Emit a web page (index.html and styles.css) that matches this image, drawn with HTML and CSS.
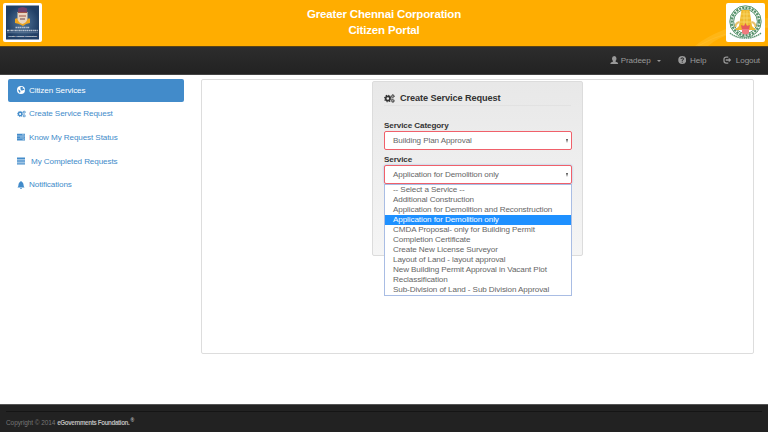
FILE: index.html
```html
<!DOCTYPE html>
<html lang="en">
<head>
<meta charset="utf-8">
<title>Citizen Portal</title>
<link rel="stylesheet" href="styles.css">
</head>
<body>
<svg width="0" height="0" class="defs">
  <defs>
    <symbol id="gears" viewBox="0 0 20 16">
      <circle cx="7" cy="8" r="3.9" fill="none" stroke="currentColor" stroke-width="3"/>
      <circle cx="7" cy="8" r="5.9" fill="none" stroke="currentColor" stroke-width="2" stroke-dasharray="2.3 2.33"/>
      <circle cx="16" cy="3.8" r="2" fill="none" stroke="currentColor" stroke-width="1.7"/>
      <circle cx="16" cy="3.8" r="3.2" fill="none" stroke="currentColor" stroke-width="1" stroke-dasharray="1.3 1.2"/>
      <circle cx="16" cy="12.2" r="2" fill="none" stroke="currentColor" stroke-width="1.7"/>
      <circle cx="16" cy="12.2" r="3.2" fill="none" stroke="currentColor" stroke-width="1" stroke-dasharray="1.3 1.2"/>
    </symbol>
  </defs>
</svg>
<header class="banner">
  <svg class="logo" viewBox="0 0 39 39">
    <rect width="39" height="39" rx="2" fill="#fff"/>
    <defs><radialGradient id="sky"><stop offset="0" stop-color="#54779a"/><stop offset="1" stop-color="#213f65"/></radialGradient></defs>
    <rect x="3" y="2.5" width="33" height="34" fill="url(#sky)"/>
    <path d="M12 16q2-2 4 1l4 3 4-3q2-3 3-1v4l-4 1-3 2-4-2-4-1z" fill="#eda51f"/>
    <path d="M15 5.500q4.500-3 9 0v4H15z" fill="#71406c"/>
    <path d="M14.500 9h10v7q-1 4-5 5-4-1-5-5z" fill="#ead5bf"/>
    <path d="M15 9.500h9M16 13h7" stroke="#9f5547"/>
    <path d="M17 16h5" stroke="#66444d"/>
    <path d="M12.500 24.500h14M4 27.500h31" stroke="#b8c3d1" stroke-width="1.400" stroke-dasharray="2 .5 1 .4"/>
    <path d="M4 29.700h31" stroke="#718aa6" stroke-width=".6"/>
    <text x="19.500" y="34" text-anchor="middle" class="logo-name">Greater Chennai Corporation</text>
  </svg>
  <h1 class="title">Greater Chennai Corporation<br>Citizen Portal</h1>
  <div class="banner-end">
    <svg class="swoosh" viewBox="0 0 108 46">
      <path d="M35 46Q58 27 108 18V28Q66 30 48 46z" fill="#ffb615"/>
      <path d="M38 46Q65 30 108 26" fill="none" stroke="#ffbd2c" stroke-width=".7"/>
    </svg>
    <svg class="logo" viewBox="0 0 39 39">
      <rect width="39" height="39" rx="2" fill="#fff"/>
      <circle cx="19.500" cy="18.500" r="15.700" fill="none" stroke="#287443" stroke-width=".8"/>
      <circle cx="19.500" cy="18.500" r="13.700" fill="none" stroke="#55916a" stroke-width="2.300" stroke-dasharray="2.200 1"/>
      <circle cx="19.500" cy="18.500" r="11.900" fill="#fff" stroke="#287443" stroke-width=".8"/>
      <path d="M15.500 7h8l2.500 16 4 4H9l4-4z" fill="#efb92f"/>
      <path d="M15 11h9M14.500 15h10M14 19h11M18 8v14M21 8v14" stroke="#fbdc73" stroke-width=".7"/>
      <path d="M9.500 24q0-4 4-5M29.500 24q0-4-4-5" fill="none" stroke="#e8c16b" stroke-width="2"/>
      <path d="M15 22l3 1 1.500-3 1.500 3 3-1-1 5h-7z" fill="#e65b5a"/>
      <path d="M16 26h7v4q-3.500 3-7 0z" fill="#f07b80"/>
      <path d="M4 30q6 5 15.500 5t15.500-5" fill="none" stroke="#5a9470" stroke-width="1.500" stroke-dasharray="1.500 .6"/>
    </svg>
  </div>
</header>
<nav class="navbar">
  <a class="nav-item user"><svg class="user-icon" viewBox="0 0 16 16"><path d="M8 0q4.500 0 4.500 5 0 3-2 5l.5 1.500q5 1 5 4.500H0q0-3.500 5-4.500l.5-1.500Q3.500 8 3.500 5q0-5 4.500-5z" fill="currentColor"/></svg><span>Pradeep</span><i class="caret"></i></a>
  <a class="nav-item help"><svg viewBox="0 0 16 16"><circle cx="8" cy="8" r="8" fill="currentColor"/><path d="M5.300 6Q5.300 3.800 8 3.800T10.600 6Q10.600 7.500 8 8.500v1.500M8 11.300v2" fill="none" stroke="#252525" stroke-width="2"/></svg><span>Help</span></a>
  <a class="nav-item logout"><svg viewBox="0 0 16 16"><path d="M10 2H6Q1.500 2 1.500 6v4Q1.500 14 6 14h4" fill="none" stroke="currentColor" stroke-width="2.500"/><path d="M5 6.500h6V3.500L16 8l-5 4.500v-3H5z" fill="currentColor"/></svg><span>Logout</span></a>
</nav>
<div class="page">
  <ul class="sidebar">
    <li class="active"><svg viewBox="0 0 16 16"><circle cx="8" cy="8" r="8" fill="#fff"/><path d="M8 1.500l4 1-1 2.500 3 .5 1 3-3-.5-2 1.500-3-2 1-2-2-1zM2 7l3 1 2 2-1 4-2-2z" fill="#428bca"/></svg><span>Citizen Services</span></li>
    <li><svg class="gear" viewBox="0 0 20 16"><use href="#gears"/></svg><span>Create Service Request</span></li>
    <li><svg viewBox="0 0 16 16"><path d="M0 1.500h16v4H0zM0 6.300h16v4H0zM0 11.100h16v4H0z" fill="currentColor"/><path d="M10 3.500h5M6 8.300h9M11 13.100h4" stroke="#b4d2eb" stroke-width="1.400"/></svg><span>Know My Request Status</span></li>
    <li class="completed"><svg viewBox="0 0 16 16"><path d="M0 2.500h16M0 6.200h16M0 9.900h16M0 13.600h16" stroke="currentColor" stroke-width="2.600"/></svg><span>My Completed Requests</span></li>
    <li><svg viewBox="0 0 16 16"><path d="M7 0h2v1.500q4 1 4 5.500 0 4 2 6H1q2-2 2-6 0-4.500 4-5.500zM6 14h4q-.5 2-2 2t-2-2z" fill="currentColor"/></svg><span>Notifications</span></li>
  </ul>
  <main class="panel">
    <form class="well">
      <h2 class="heading"><svg viewBox="0 0 20 16"><use href="#gears"/></svg><span>Create Service Request</span></h2>
      <label class="first-label">Service Category</label>
      <div class="select">Building Plan Approval<i class="arrow"></i></div>
      <label class="second-label">Service</label>
      <div class="select open">Application for Demolition only<i class="arrow"></i>
        <ul class="options">
          <li><span>-- Select a Service --</span></li>
          <li><span>Additional Construction</span></li>
          <li><span>Application for Demolition and Reconstruction</span></li>
          <li class="chosen"><span>Application for Demolition only</span></li>
          <li><span>CMDA Proposal- only for Building Permit</span></li>
          <li><span>Completion Certificate</span></li>
          <li><span>Create New License Surveyor</span></li>
          <li><span>Layout of Land - layout approval</span></li>
          <li><span>New Building Permit Approval in Vacant Plot</span></li>
          <li><span>Reclassification</span></li>
          <li><span>Sub-Division of Land - Sub Division Approval</span></li>
        </ul>
      </div>
    </form>
  </main>
</div>
<footer class="footer">
  <p>Copyright © 2014 <b>eGovernments Foundation.<sup>®</sup></b></p>
</footer>
</body>
</html>
```
FILE: styles.css
```css
* { box-sizing: border-box; }
body {
  margin: 0;
  height: 432px;
  display: flex;
  flex-direction: column;
  overflow: hidden;
  background: #fff;
  font: 8.1px/11px "Liberation Sans", Arial, sans-serif;
  letter-spacing: -0.1px;
}
ul, h1, h2, p { margin: 0; padding: 0; list-style: none; }
svg { display: block; flex: none; }
.defs { position: absolute; }
.banner {
  height: 46px;
  flex: none;
  display: grid;
  grid-template-columns: 108px 1fr 108px;
  align-items: center;
  background: #ffad00;
}
.logo { width: 39px; height: 39px; margin: -1px 0 0 3px; overflow: visible; }
.logo-name { font: bold 2.1px "Liberation Sans", sans-serif; letter-spacing: 0; fill: #fff; }
.title {
  color: #fff;
  text-align: center;
  font-size: 11.5px;
  letter-spacing: -0.16px;
  line-height: 16px;
  margin-top: -2px;
}
.banner-end { position: relative; height: 46px; display: flex; justify-content: flex-end; align-items: center; }
.banner-end .logo { position: relative; margin: -1px 3px 0 0; }
.swoosh { position: absolute; left: 0; top: 0; width: 108px; height: 46px; }
.navbar {
  height: 29px;
  flex: none;
  display: flex;
  justify-content: flex-end;
  align-items: center;
  padding-right: 8px;
  color: #999;
  background: linear-gradient(#2d2d2d, #222);
  border-top: 1px solid #5a4316;
  border-bottom: 1px solid #444;
}
.nav-item { display: flex; align-items: center; }
.nav-item svg { width: 8.5px; height: 8px; margin: -1px 4px 0 0; }
.nav-item .user-icon { margin-right: 2px; }
.help { margin-left: 17px; }
.logout { margin-left: 17px; }
.caret { margin: 1px 0 0 6px; border: 2px solid transparent; border-top-color: #999; border-bottom: 0; }
.page { flex: 1; display: flex; align-items: flex-start; padding: 4px 14px 0 8px; }
.sidebar {
  width: 176px;
  flex: none;
  color: #428bca;
  display: flex;
  flex-direction: column;
  gap: 1.1px;
}
.sidebar li { height: 22.5px; padding-left: 9px; display: flex; align-items: center; border-radius: 2px; }
.sidebar svg { width: 8px; height: 8px; margin-right: 4px; }
.sidebar .gear { width: 9px; margin-right: 3px; }
.sidebar .completed svg { margin-right: 6px; }
.sidebar .active { background: #428bca; color: #fff; }
.panel {
  flex: 1;
  height: 275px;
  margin-left: 17px;
  padding-top: 1px;
  border: 1px solid #ddd;
  border-radius: 2px;
}
.well {
  width: 211px;
  height: 175px;
  margin: 0 0 0 170px;
  padding: 9px 11px 0;
  border: 1px solid #dcdcdc;
  border-radius: 2px;
  background: linear-gradient(#e8e8e8, #f5f5f5);
  color: #333;
}
.heading { display: flex; align-items: center; height: 15px; font-size: 9.2px; border-bottom: 1px solid #e2e2e2; }
.heading svg { width: 11px; height: 9px; margin-right: 5px; }
.well label { display: block; font-weight: bold; height: 10px; line-height: 10px; }
.first-label { margin-top: 15px; }
.second-label { margin-top: 5px; }
.select {
  position: relative;
  height: 19px;
  padding-left: 8px;
  line-height: 18px;
  color: #666;
  background: #fff;
  border: 1px solid #f0606a;
  border-radius: 2px;
}
.open { box-shadow: 0 0 2px #8cb4e0; }
.select { width: 188px; }
.arrow { position: absolute; right: 3px; top: 7px; border: 1.5px solid transparent; border-top: 4px solid #555; border-bottom: 0; }
.options {
  position: absolute;
  left: -1px;
  right: -1px;
  top: 18px;
  height: 112px;
  background: #fff;
  border: 1px solid #a9bde4;
}
.options li { height: 10px; line-height: 10px; padding-left: 8px; }
.options .chosen { color: #fff; background: #1e90ff; }
.footer {
  height: 28px;
  flex: none;
  margin: 0;
  padding: 6px 6px 0;
  background: #222;
  border-top: 1px solid #555;
  color: #777;
  font-size: 6.5px;
  letter-spacing: -0.08px;
}
.footer p { border-top: 1px solid #151515; padding-top: 5px; line-height: 11px; }
.footer b { color: #bbb; letter-spacing: -0.4px; font-size: 6.3px; }
.footer sup { font-size: 5px; line-height: 0; margin-left: 1px; }
```
